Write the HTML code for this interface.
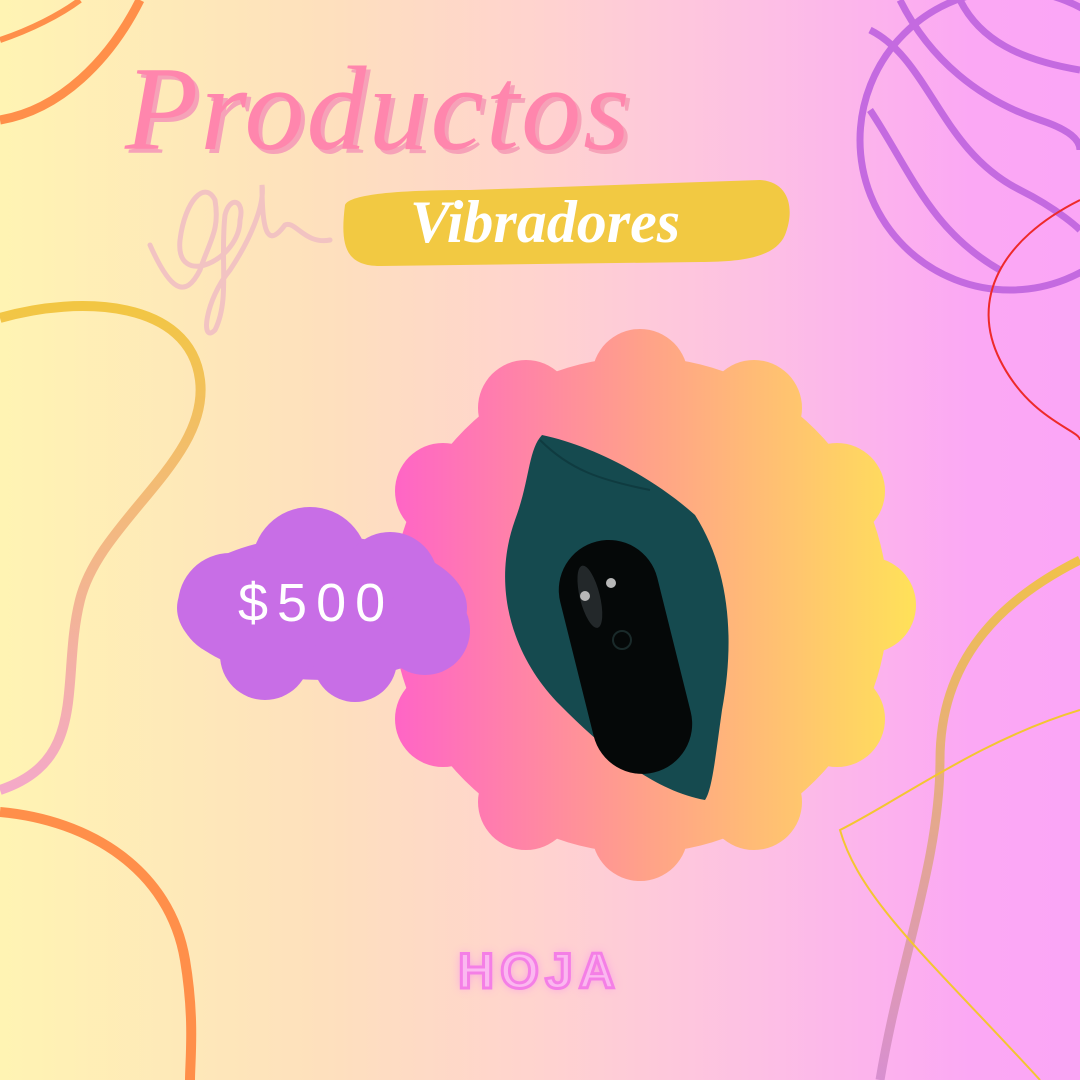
<!DOCTYPE html>
<html><head><meta charset="utf-8"><style>
html,body{margin:0;padding:0}
body{width:1080px;height:1080px;overflow:hidden;position:relative;background:linear-gradient(90deg,#fff4b3 0%,#fee0bd 30%,#ffd3cf 50%,#fdc0e4 70%,#fba8f4 90%,#fba6f6 100%);font-family:"Liberation Sans",sans-serif}
svg{position:absolute;left:0;top:0}
.t{position:absolute;font-family:"Liberation Serif",serif;font-style:italic}
</style></head><body>
<svg width="1080" height="1080" viewBox="0 0 1080 1080">
<defs>
<linearGradient id="fl" gradientUnits="userSpaceOnUse" x1="370" y1="0" x2="910" y2="0">
<stop offset="0" stop-color="#ff5fcc"/><stop offset="0.5" stop-color="#ffa08a"/><stop offset="1" stop-color="#ffe05a"/></linearGradient>
<linearGradient id="yl" x1="0" y1="0" x2="0" y2="1"><stop offset="0" stop-color="#f2c643"/><stop offset="1" stop-color="#f4a9c8"/></linearGradient>
<linearGradient id="rl" x1="0" y1="0" x2="0" y2="1"><stop offset="0" stop-color="#f0c14a"/><stop offset="1" stop-color="#d88fd0"/></linearGradient>
</defs>
<path d="M0,120 C60,110 110,60 140,0" stroke="#ff8f4a" stroke-width="9" fill="none"/>
<path d="M0,40 C30,30 60,15 80,0" stroke="#ff8f4a" stroke-width="6" fill="none"/>
<path d="M0,318 C80,295 190,300 200,380 C210,460 100,520 80,600 C60,680 90,760 0,790" stroke="url(#yl)" stroke-width="10" fill="none"/>
<path d="M0,812 C90,820 170,870 185,960 C195,1020 190,1060 190,1080" stroke="#ff8f4a" stroke-width="10" fill="none"/>
<g stroke="#c46ae0" stroke-width="7" fill="none">
<circle cx="1010" cy="140" r="150"/>
<path d="M870,30 C930,60 940,150 1020,190 C1060,210 1080,230 1080,230"/>
<path d="M900,0 C930,60 980,100 1040,120 C1070,130 1080,140 1080,150"/>
<path d="M960,0 C980,40 1020,60 1080,70"/>
<path d="M870,110 C910,170 930,230 1000,270"/>
</g>
<path d="M1080,560 C1000,600 940,660 940,760 C940,860 900,960 880,1080" stroke="url(#rl)" stroke-width="9" fill="none"/>
<path d="M1080,200 C1000,240 970,300 1000,360 C1030,420 1080,430 1080,440" stroke="#ee2a2a" stroke-width="2" fill="none"/>
<path d="M1080,710 C980,740 900,800 840,830 C860,900 930,960 1040,1080" stroke="#f3c630" stroke-width="2" fill="none"/>
<path d="M150,245 C170,290 185,300 200,270 C210,240 220,230 215,200 C205,180 185,200 180,240 C175,290 240,260 240,220 C245,200 230,195 225,215 C220,260 230,300 215,330 C200,345 205,300 230,270 C250,240 265,205 262,185 C262,240 270,245 285,225 C295,220 305,245 330,240" stroke="#f2c3c2" stroke-width="5" fill="none" stroke-linecap="round"/>
<path d="M345,205 C350,192 420,190 470,190 L760,180 C790,182 795,210 785,235 C775,258 740,262 700,262 L380,266 C345,266 340,245 345,205Z" fill="#f2c942"/>
<g fill="url(#fl)">
<circle cx="640" cy="605" r="248"/>
<circle cx="640" cy="377" r="48"/><circle cx="754" cy="408" r="48"/><circle cx="837" cy="491" r="48"/><circle cx="868" cy="605" r="48"/><circle cx="837" cy="719" r="48"/><circle cx="754" cy="802" r="48"/><circle cx="640" cy="833" r="48"/><circle cx="526" cy="802" r="48"/><circle cx="443" cy="719" r="48"/><circle cx="412" cy="605" r="48"/><circle cx="443" cy="491" r="48"/><circle cx="526" cy="408" r="48"/>
</g>
<g fill="#c86ee6">
<ellipse cx="322" cy="608" rx="145" ry="72"/>
<circle cx="310" cy="565" r="58"/><circle cx="390" cy="580" r="48"/><circle cx="230" cy="605" r="52"/><circle cx="425" cy="630" r="45"/><circle cx="265" cy="655" r="45"/><circle cx="355" cy="660" r="42"/>
</g>
<path d="M542,435 C590,445 650,475 695,515 C730,570 735,640 722,710 C715,760 712,790 705,800 C650,790 600,745 560,705 C515,660 490,590 515,520 C530,480 528,450 542,435Z" fill="#154a4f"/>
<path d="M540,440 C570,470 600,480 650,490" stroke="#0f3b40" stroke-width="2" fill="none"/>
<g transform="rotate(-14 625 655)">
<rect x="575" y="538" width="100" height="238" rx="50" fill="#050808"/>
<ellipse cx="605" cy="590" rx="10" ry="32" fill="#23282a"/>
</g>
<circle cx="585" cy="596" r="5" fill="#b8b8b8"/><circle cx="611" cy="583" r="5" fill="#b8b8b8"/>
<circle cx="622" cy="640" r="9" fill="none" stroke="#1a2a2a" stroke-width="2"/>
</svg>
<div class="t" style="left:125px;top:40px;font-size:120px;color:#ff86ad;text-shadow:4px 4px 0 #f6a2b8;letter-spacing:2px">Productos</div>
<div class="t" style="left:410px;top:188px;font-size:60px;color:#fff;font-weight:bold">Vibradores</div>
<div style="position:absolute;left:238px;top:572px;font-size:54px;color:#fff;letter-spacing:9px">$500</div>
<div style="position:absolute;left:458px;top:942px;font-size:50px;font-weight:bold;letter-spacing:6px;color:#fbb8f0;-webkit-text-stroke:3px #f47fe6;text-shadow:0 0 10px #f79ae8">HOJA</div>
</body></html>
